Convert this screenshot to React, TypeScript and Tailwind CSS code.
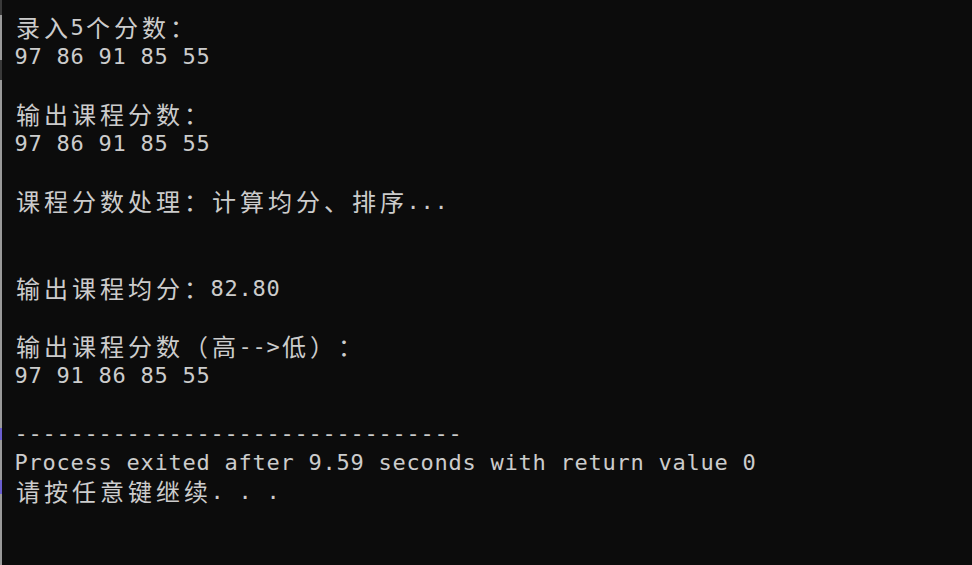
import React from "react"

const lines = [
    "录入5个分数：",
    "97 86 91 85 55",
    "",
    "输出课程分数：",
    "97 86 91 85 55",
    "",
    "课程分数处理：计算均分、排序...",
    "",
    "",
    "输出课程均分：82.80",
    "",
    "输出课程分数（高-->低）：",
    "97 91 86 85 55",
    "",
    "--------------------------------",
    "Process exited after 9.59 seconds with return value 0",
    "请按任意键继续. . .",
]

const isWide = (c: string) => /[\u3000-\u9fff\uff00-\uffef]/.test(c)

// each character sits in a console cell: 14px narrow, 28px wide
const Line = ({ text }: { text: string }) => (
    <div className="flex h-[29px]">
        {[...text].map((c, i) =>
            isWide(c) ? (
                <span key={i} className="block w-[28px] shrink-0 text-center text-[24px] leading-[27px] font-['Noto_Sans_CJK_SC',sans-serif]">
                    {c}
                </span>
            ) : (
                <span key={i} className="block w-[14px] shrink-0 text-center whitespace-pre">
                    {c}
                </span>
            )
        )}
    </div>
)

export default function App() {
    return (
        <div className="flex h-[565px] w-[972px] overflow-hidden bg-[#0c0c0c]">
            <div className="flex w-[2px] shrink-0 flex-col">
                <div className="h-[15px] bg-[#3a3a3a]" />
                <div className="h-[45px] bg-[#9a9a9a]" />
                <div className="h-[20px] bg-[#3a3a3a]" />
                <div className="h-[348px] bg-[#9a9a9a]" />
                <div className="h-[12px] bg-[#6b5fd0]" />
                <div className="h-[40px] bg-[#9a9a9a]" />
                <div className="h-[14px] bg-[#6b5fd0]" />
                <div className="flex-1 bg-[#9a9a9a]" />
            </div>
            <div className="flex flex-col pl-[12px] pt-[13px] text-[22px] leading-[29px] text-[#cccccc] font-['DejaVu_Sans_Mono','Noto_Sans_CJK_SC',monospace]">
                {lines.map((t, i) => (
                    <Line key={i} text={t} />
                ))}
            </div>
        </div>
    )
}
